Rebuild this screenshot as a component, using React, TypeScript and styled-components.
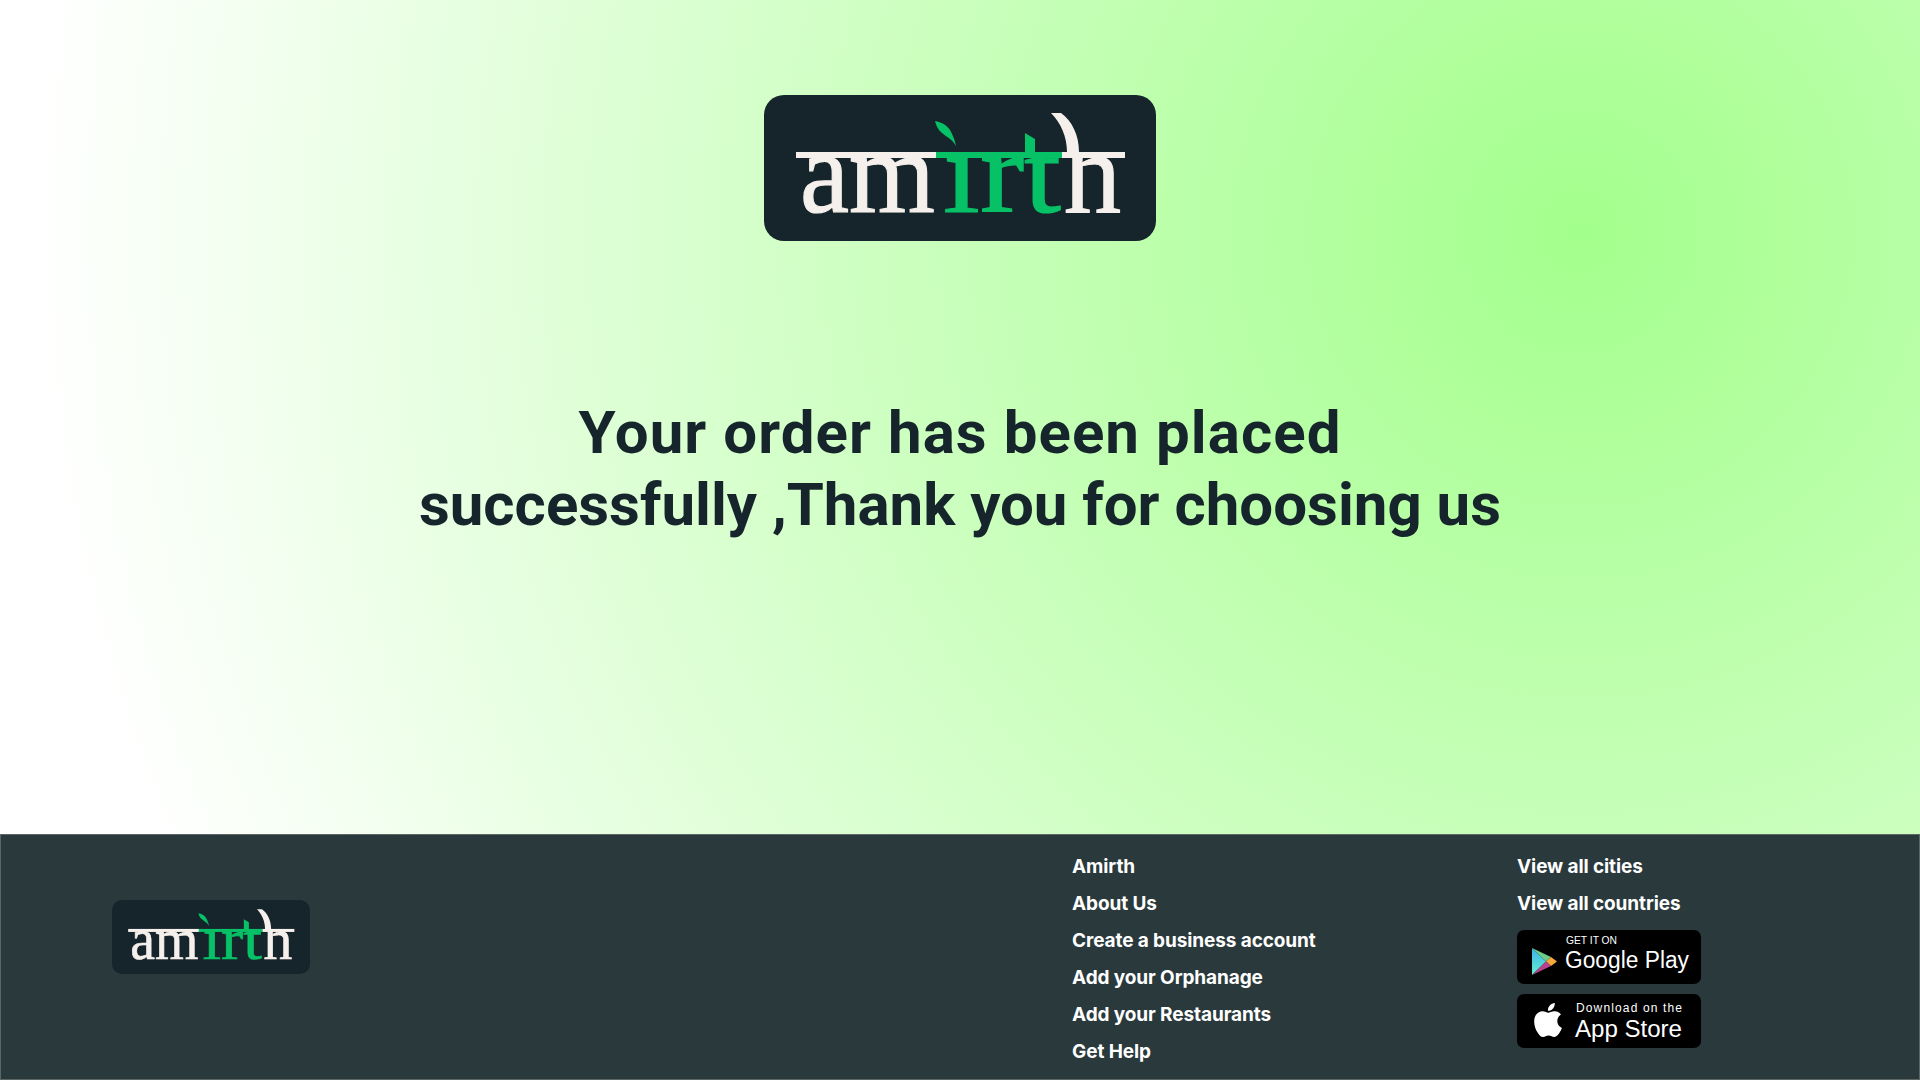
import { useId } from "react";
import styled, { createGlobalStyle } from "styled-components";
import { SiApple } from "react-icons/si";

const GlobalStyle = createGlobalStyle`
  html, body {
    margin: 0;
    padding: 0;
  }
  body {
    font-family: "Inter", "Liberation Sans", Arial, sans-serif;
  }
`;

const Page = styled.div`
  width: 1920px;
  height: 1080px;
  display: flex;
  flex-direction: column;
  overflow: hidden;
`;

const Hero = styled.main`
  height: 834px;
  display: flex;
  flex-direction: column;
  align-items: center;
  padding-top: 95px;
  box-sizing: border-box;
  background: radial-gradient(circle 1550px at 1580px 232px, #a3ff8c 0%, #ffffff 100%);
`;

const LogoBox = styled.div<{ $small?: boolean }>`
  width: ${(p) => (p.$small ? 198 : 392)}px;
  height: ${(p) => (p.$small ? 74 : 146)}px;
  border-radius: ${(p) => (p.$small ? 10 : 20)}px;
  background: #16252b;
  flex-shrink: 0;
  svg {
    display: block;
    width: 100%;
    height: 100%;
  }
`;

const Message = styled.h1`
  margin: 156px 0 0;
  font-family: "Roboto", "Liberation Sans", Arial, sans-serif;
  font-size: 60px;
  line-height: 72px;
  font-weight: 700;
  color: #16252b;
  text-align: center;
  width: 1200px;
`;

const MessageLine = styled.span<{ $tracking?: number }>`
  display: block;
  letter-spacing: ${(p) => p.$tracking ?? 0}px;
`;

const Footer = styled.footer`
  height: 246px;
  box-sizing: border-box;
  background: #2a393c;
  border: 1px solid #5c6665;
  display: flex;
  padding-left: 111px;
`;

const FooterLogo = styled.div`
  width: 960px;
  padding-top: 65px;
`;

const LinkColumn = styled.nav`
  width: 445px;
  display: flex;
  flex-direction: column;
  gap: 13px;
  padding-top: 20px;
`;

const StoreColumn = styled(LinkColumn)`
  width: 200px;
`;

const FooterLink = styled.a`
  font-family: "Inter", sans-serif;
  font-size: 19px;
  line-height: 24px;
  font-weight: 700;
  letter-spacing: -0.1px;
  color: #ffffff;
`;

const Badge = styled.div`
  width: 184px;
  height: 54px;
  border-radius: 7px;
  background: #000;
  color: #fff;
  svg {
    display: block;
  }
`;

const Badges = styled.div`
  display: flex;
  flex-direction: column;
  gap: 10px;
  margin-top: 1px;
`;

function LogoMark() {
  const cream = "#f5f0eb";
  const green = "#07c167";
  const font = '"Liberation Serif", serif';
  const clipId = useId();
  return (
    <svg viewBox="0 0 392 146">
      <defs>
        <clipPath id={clipId}>
          <rect x="0" y="60" width="392" height="86" />
        </clipPath>
      </defs>
      <g clipPath={`url(#${clipId})`} strokeWidth="1.2">
        <text x="36" y="117" fontFamily={font} fontSize="116" textLength="135" lengthAdjust="spacingAndGlyphs" fill={cream} stroke={cream}>am</text>
        <text x="179" y="117" fontFamily={font} fontSize="116" textLength="118" lengthAdjust="spacingAndGlyphs" fill={green} stroke={green}>irt</text>
        <text x="300" y="117" fontFamily={font} fontSize="116" textLength="57" lengthAdjust="spacingAndGlyphs" fill={cream} stroke={cream}>h</text>
      </g>
      <rect x="32" y="57" width="140" height="6" fill={cream} />
      <rect x="172" y="57" width="126" height="6" fill={green} />
      <rect x="298" y="57" width="63" height="6" fill={cream} />
      <path d="M171 26c6 1 12 4 15 9 3 5 5 11 6 16-3-6-9-9-14-13-4-3-6-8-7-12z" fill={green} />
      <path d="M287 18h10c11 8 18 22 18 39h-12c0-15-6-29-16-39z" fill={cream} />
      <path d="M261 38l10 6v13h-10z" fill={green} />
    </svg>
  );
}

function GooglePlayBadge() {
  const gradId = useId();
  return (
    <svg width="184" height="54" viewBox="0 0 184 54">
      <defs>
        <linearGradient id={gradId} x1="0" y1="0" x2="0" y2="1">
          <stop offset="0" stopColor="#3fb0e8" />
          <stop offset="1" stopColor="#62efcf" />
        </linearGradient>
      </defs>
      <path d="M15 18v27l14-13.500z" fill={`url(#${gradId})`} />
      <path d="M15 18l14 13.500 5-4.500z" fill="#6ecb8a" />
      <path d="M29 31.500l5-4.500 6 4.500-6 4.500z" fill="#f8a83a" />
      <path d="M15 45l14-13.500 5 4.500z" fill="#b8428f" />
      <text x="49" y="14" fontFamily='"Liberation Sans", sans-serif' fontSize="11" textLength="51" lengthAdjust="spacingAndGlyphs" fill="#fff">GET IT ON</text>
      <text x="48" y="38" fontFamily='"Liberation Sans", sans-serif' fontSize="23" textLength="124" lengthAdjust="spacingAndGlyphs" fill="#fff">Google Play</text>
    </svg>
  );
}

function AppStoreBadge() {
  return (
    <svg width="184" height="54" viewBox="0 0 184 54">
      <SiApple x="14" y="9" size={34} color="#fff" />
      <text x="59" y="18" fontFamily='"Liberation Sans", sans-serif' fontSize="12" textLength="106" lengthAdjust="spacing" fill="#fff">Download on the</text>
      <text x="58" y="43" fontFamily='"Liberation Sans", sans-serif' fontSize="24" textLength="107" lengthAdjust="spacingAndGlyphs" fill="#fff">App Store</text>
    </svg>
  );
}

export default function App() {
  return (
    <Page>
      <GlobalStyle />
      <Hero>
        <LogoBox>
          <LogoMark />
        </LogoBox>
        <Message>
          <MessageLine $tracking={1.05}>Your order has been placed</MessageLine>
          <MessageLine>successfully ,Thank you for choosing us</MessageLine>
        </Message>
      </Hero>
      <Footer>
        <FooterLogo>
          <LogoBox $small>
            <LogoMark />
          </LogoBox>
        </FooterLogo>
        <LinkColumn>
          <FooterLink>Amirth</FooterLink>
          <FooterLink>About Us</FooterLink>
          <FooterLink>Create a business account</FooterLink>
          <FooterLink>Add your Orphanage</FooterLink>
          <FooterLink>Add your Restaurants</FooterLink>
          <FooterLink>Get Help</FooterLink>
        </LinkColumn>
        <StoreColumn>
          <FooterLink>View all cities</FooterLink>
          <FooterLink>View all countries</FooterLink>
          <Badges>
            <Badge>
              <GooglePlayBadge />
            </Badge>
            <Badge>
              <AppStoreBadge />
            </Badge>
          </Badges>
        </StoreColumn>
      </Footer>
    </Page>
  );
}
